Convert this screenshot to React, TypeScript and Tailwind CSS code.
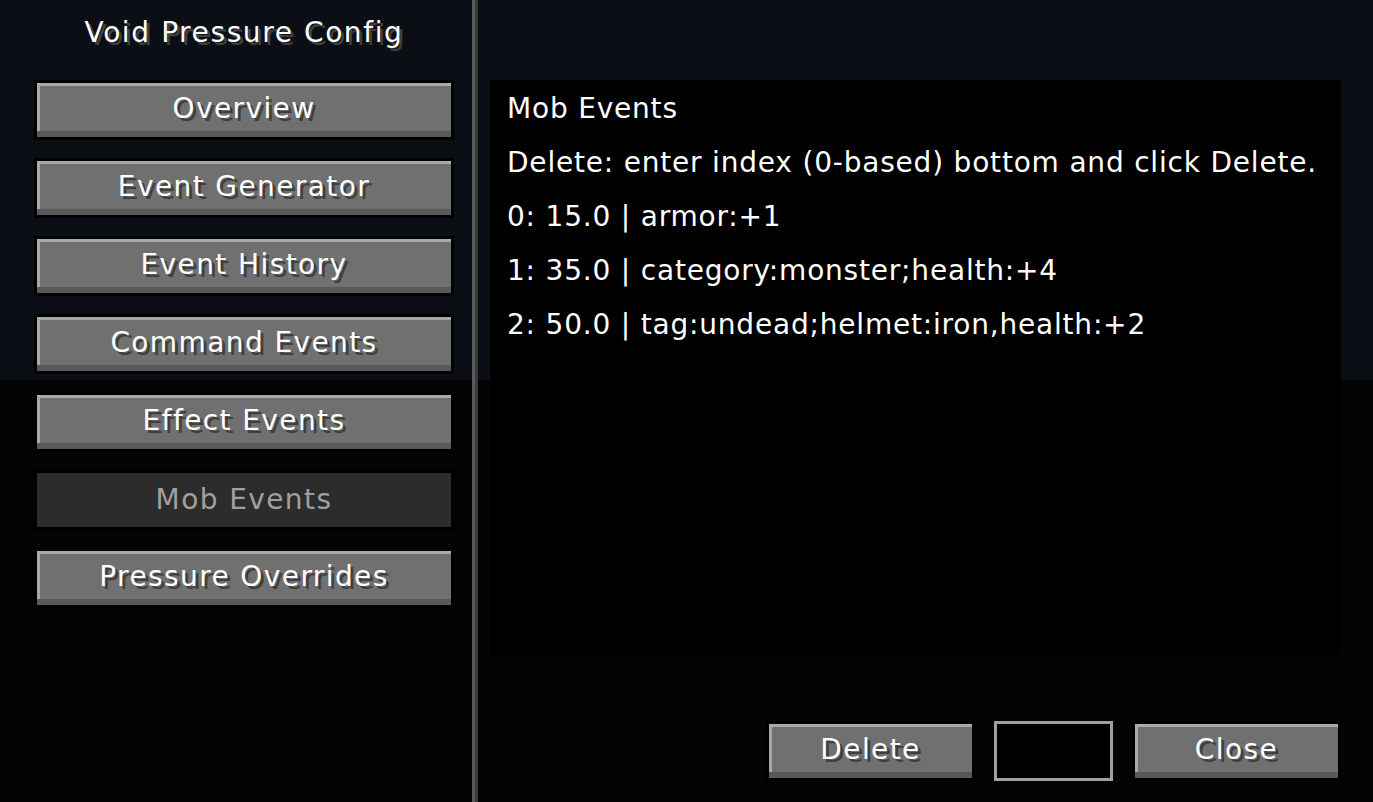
import React from 'react';

const font = { fontFamily: '"DejaVu Sans", "Liberation Sans", sans-serif' };

const navItems = [
  { id: 'overview', label: 'Overview' },
  { id: 'generator', label: 'Event Generator' },
  { id: 'history', label: 'Event History' },
  { id: 'command', label: 'Command Events' },
  { id: 'effect', label: 'Effect Events' },
  { id: 'mob', label: 'Mob Events', disabled: true },
  { id: 'overrides', label: 'Pressure Overrides' },
];

const entries = [
  '0: 15.0 | armor:+1',
  '1: 35.0 | category:monster;health:+4',
  '2: 50.0 | tag:undead;helmet:iron,health:+2',
];

const McButton = ({ label, disabled = false, width }: { label: string; disabled?: boolean; width: string }) => {
  return (
    <div className={`${width} h-[60px] border-[3px] border-black shrink-0`}>
      {disabled ? (
        <div className="w-full h-full bg-[#2c2c2c] flex items-center justify-center text-[#a0a0a0] text-[28px] tracking-[1.4px] whitespace-nowrap">
          {label}
        </div>
      ) : (
        <div className="w-full h-full bg-[#707070] shadow-[inset_0_-6px_0_#585858,inset_3px_3px_0_#a9a9a9] flex items-center justify-center pb-[2px] text-white text-[28px] tracking-[1.4px] whitespace-nowrap [text-shadow:3px_3px_0_#3f3f3f]">
          {label}
        </div>
      )}
    </div>
  );
};

export default function App() {
  return (
    <div
      className="w-[1373px] h-[802px] overflow-hidden flex bg-[linear-gradient(to_bottom,#0b0e15_0px,#0b0e15_380px,#040404_380px,#040404_802px)]"
      style={font}
    >
      {/* Sidebar */}
      <aside className="w-[472px] shrink-0 flex flex-col pl-[34px]">
        <div className="w-[420px] h-[64px] pt-[2px] flex items-center justify-center text-white text-[28px] tracking-[1.6px] leading-none whitespace-nowrap [text-shadow:3px_3px_0_#3f3f3f]">
          Void Pressure Config
        </div>
        <div className="mt-[16px] flex flex-col gap-[18px]">
          {navItems.map((item) => (
            <McButton key={item.id} label={item.label} disabled={item.disabled} width="w-[420px]" />
          ))}
        </div>
      </aside>

      {/* Divider */}
      <div className="w-[6px] h-full flex shrink-0">
        <div className="w-[3px] h-full bg-[#5a5a5a]" />
        <div className="w-[3px] h-full bg-[#3a3a3a]" />
      </div>

      {/* Main */}
      <main className="flex-1 flex flex-col pt-[80px] pl-[12px] pr-[32px]">
        <div className="w-[851px] h-[575px] bg-black pt-[2px] pl-[17px] text-white text-[28px] tracking-[0.8px] leading-[54px] whitespace-nowrap">
          <div>Mob Events</div>
          <div>Delete: enter index (0-based) bottom and click Delete.</div>
          {entries.map((e) => (
            <div key={e}>{e}</div>
          ))}
        </div>
        <div className="mt-[66px] flex justify-end items-center gap-[19px]">
          <McButton label="Delete" width="w-[209px]" />
          <div className="w-[119px] h-[60px] border-[3px] border-[#a0a0a0] bg-black" />
          <McButton label="Close" width="w-[209px]" />
        </div>
      </main>
    </div>
  );
}
